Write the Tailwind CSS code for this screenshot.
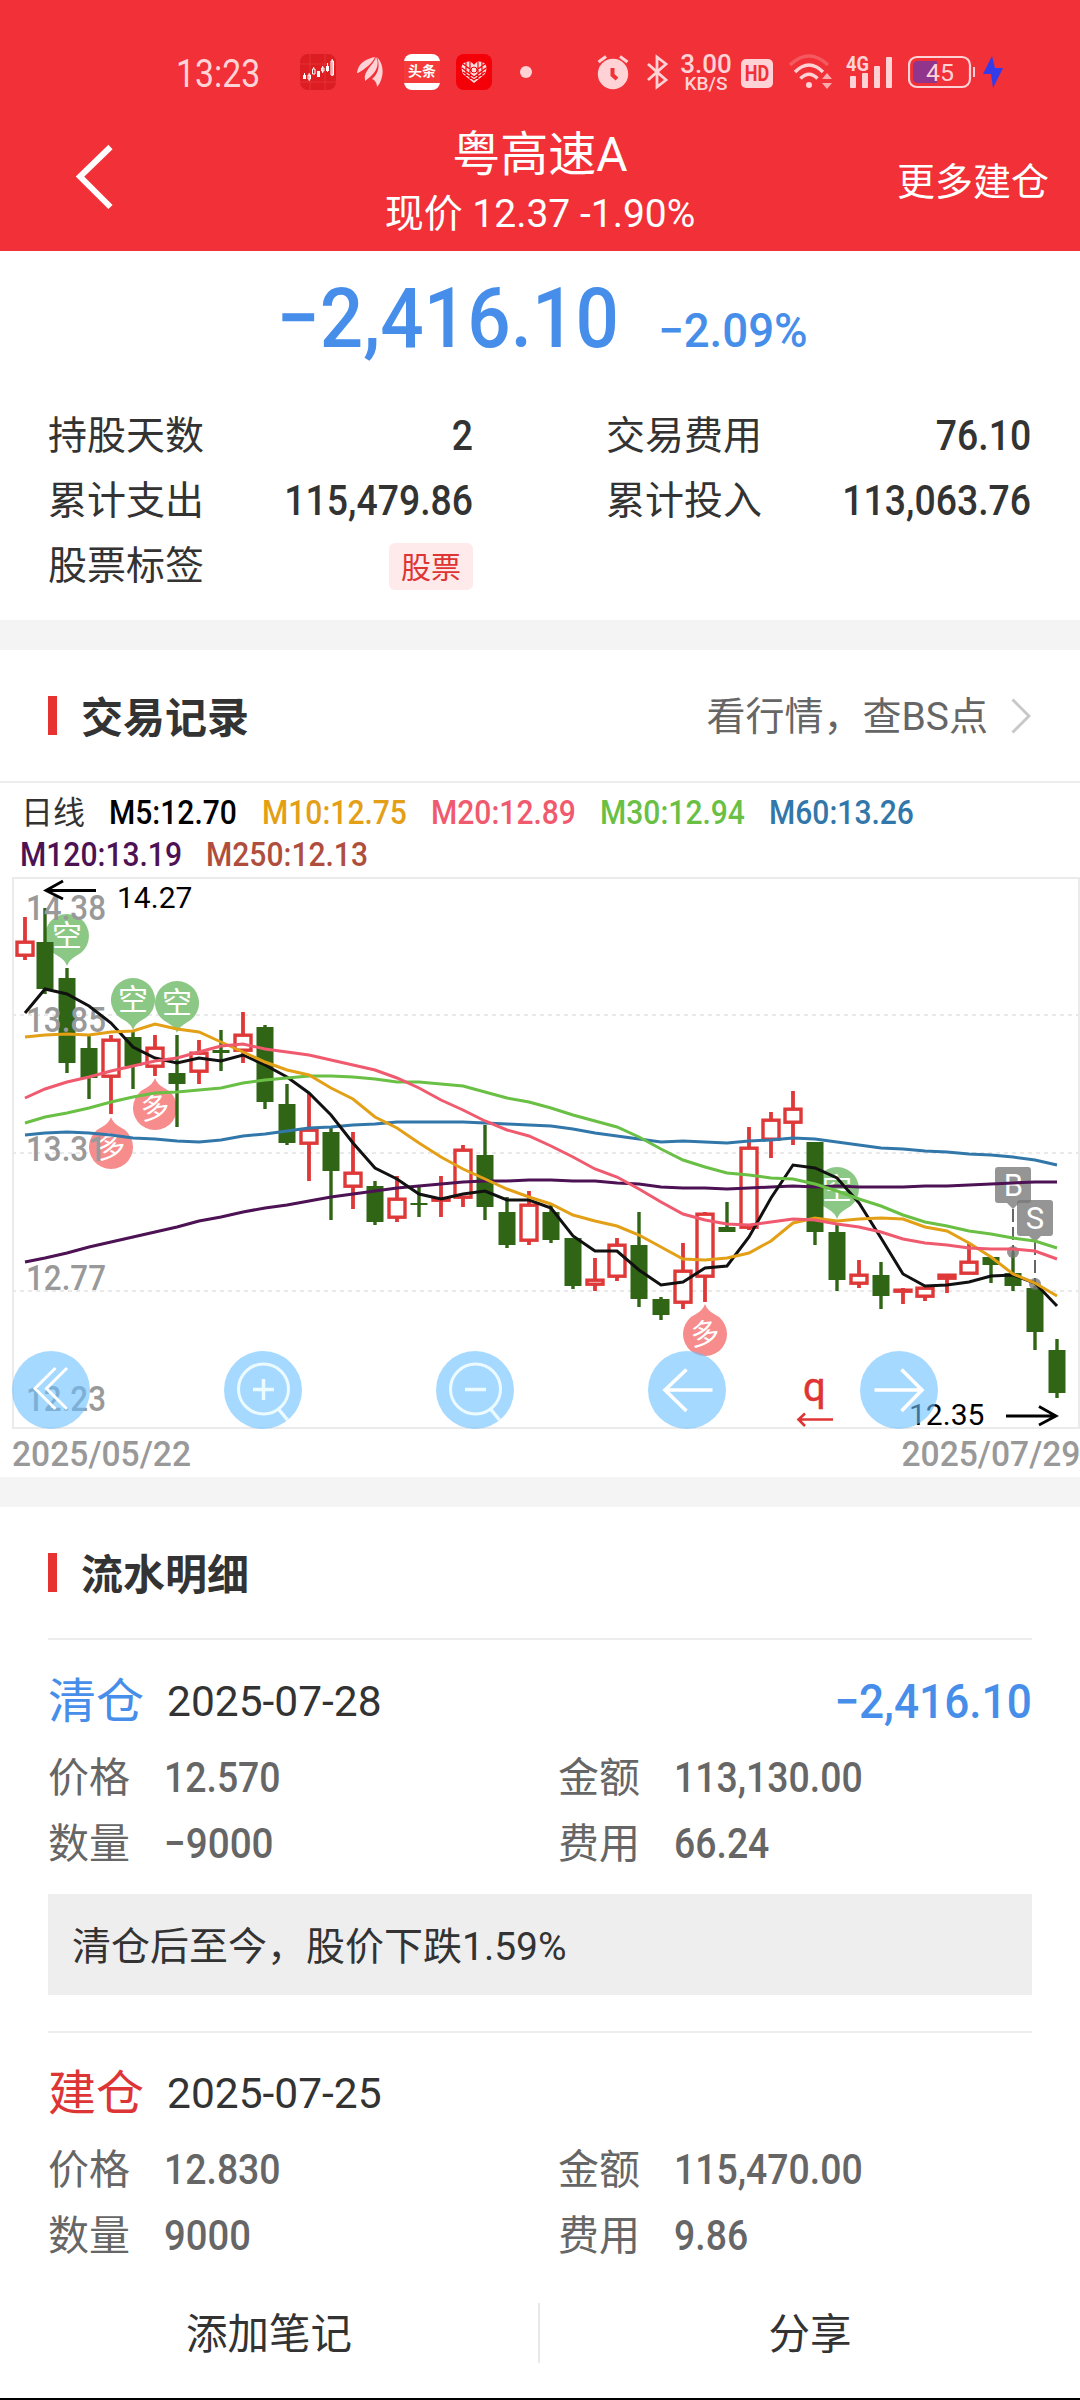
<!DOCTYPE html>
<html lang="zh-CN">

<head>
    <meta charset="UTF-8">
    <meta name="viewport" content="width=device-width, initial-scale=1.0">
    <title>粤高速A</title>
    <script src="https://cdn.jsdelivr.net/npm/@tailwindcss/browser@4"></script>
</head>

<body class="w-[1080px] h-[2400px] overflow-hidden bg-white text-[#333] font-[Roboto,'Noto_Sans_CJK_SC',sans-serif]">
    <div class="flex flex-col h-[2400px] border-b-2 border-black">
        <header class="h-[251px] shrink-0 bg-[#f13038] text-white flex flex-col">
            <!-- status bar -->
            <div class="h-[104px] pt-[40px] flex text-[#ffd3d5]">
                <div class="flex items-center h-[64px] pl-[176px]">
                    <span class="w-[124px] pt-[3px] text-[38px] leading-none whitespace-nowrap"><span class="inline-block origin-left scale-x-[.89]">13:23</span></span>
                    <svg class="w-9 h-9" viewBox="0 0 36 36">
                        <rect width="36" height="36" rx="8" fill="#dc1e22"/>
                        <path d="M10 0v36M25 0v36M0 10h36M0 28h36" stroke="#e8393c" stroke-width=".7"/>
                        <g fill="#fff"><path d="M3 21h3v4H3zM17 17h3v6h-3zM26 12h3v5h-3z"/></g>
                        <g fill="none" stroke="#fff" stroke-width="1"><path d="M4.500 19v6M8 21h2.500v4H8zM9.200 19v8M12.500 15H15v5h-2.500zM13.700 13v2M21.500 14H24v3h-2.500zM22.700 12v7M27.500 9v9M31 7h2.500v14H31zM32.200 5v17"/></g>
                    </svg>
                    <svg class="w-[26px] h-[30px] ml-[21px]" viewBox="0 0 26 30" fill="currentColor">
                        <path d="M0 16C1 6 9 2 18 0C15 7 9 11 1 16z"/>
                        <path d="M8 23C6 14 16 9 19 0C24 9 17 18 8 24z"/>
                        <path d="M15 22C22 16 23 8 20 0C28 8 27 22 20 30C20 26 18 23 15 22z"/>
                    </svg>
                    <div class="w-9 h-9 ml-[21px] rounded-lg bg-white overflow-hidden flex items-center">
                        <div class="w-9 h-[22px] bg-[#f53a3a] text-white text-[14px] font-bold leading-[21px] text-center">头条</div>
                    </div>
                    <svg class="w-9 h-9 ml-[16px]" viewBox="0 0 36 36">
                        <rect width="36" height="36" rx="8" fill="#f30008"/>
                        <path d="M18 29L7 20Q3 10 10 8Q15 6 18 11Q21 6 26 8Q33 10 29 20z" fill="#ffdede"/>
                        <path d="M10 8v14M14 8v17M22 8v17M26 8v14M6 14l12 9 12-9M7 18l11 8 11-8M7 10l11 8 11-8" fill="none" stroke="#f30008" stroke-width="1.200"/>
                        <circle cx="18" cy="16" r="3" fill="#ffdede" stroke="#f30008"/>
                    </svg>
                    <span class="w-3 h-3 rounded-full bg-[#ffd3d5] ml-[28px]"></span>
                </div>
                <div class="flex items-center h-[64px] pl-[65px]">
                    <svg class="w-8 h-[36px]" viewBox="0 0 32 36">
                        <circle cx="16" cy="20" r="15.200" fill="currentColor"/>
                        <path d="M1.500 8L9 2.500M30.500 8L23 2.500" stroke="currentColor" stroke-width="3"/>
                        <path d="M15.500 14v7l4.500 4" fill="none" stroke="#f13038" stroke-width="4"/>
                    </svg>
                    <svg class="w-[22px] h-[36px] ml-[18px]" viewBox="0 0 22 36" fill="none" stroke="currentColor" stroke-width="2.800">
                        <path d="M1 10L19 26L10 33V3L19 10L1 26"/>
                    </svg>
                    <div class="w-[52px] ml-[11px] pt-[4px] flex flex-col items-center font-medium whitespace-nowrap">
                        <span class="text-[26px] leading-[20px]">3.00</span>
                        <span class="text-[19px] leading-[20px]">KB/S</span>
                    </div>
                    <div class="w-8 h-[29px] ml-[9px] mt-[2px] rounded-[5px] bg-[#ffd3d5] text-[#f13038] text-[22px] leading-[30px] font-bold flex justify-center"><span class="scale-x-[.82]">HD</span></div>
                    <svg class="w-[46px] h-[36px] ml-[16px]" viewBox="0 0 46 36" fill="none" stroke="currentColor" stroke-width="3.500">
                        <path d="M1 11Q20-7 39 11" opacity=".25"/>
                        <path d="M6 18Q20 4 34 18M11.500 24.500Q20 16 28.500 24.500"/>
                        <circle cx="20" cy="31" r="3" fill="currentColor" stroke="none"/>
                        <path d="M33 25l5-6 5 6zM33 29h10l-5 6z" fill="currentColor" stroke="none" opacity=".75"/>
                    </svg>
                    <svg class="w-[48px] h-[36px] ml-[11px] overflow-visible" viewBox="0 0 48 36" fill="currentColor">
                        <text x="0" y="17" font-size="21" font-weight="700" textLength="23" lengthAdjust="spacingAndGlyphs">4G</text>
                        <rect x="4" y="22" width="6" height="12" rx="1"/><rect x="16" y="19" width="6" height="15" rx="1"/><rect x="28" y="12" width="6" height="22" rx="1"/><rect x="40" y="3" width="6" height="31" rx="1"/>
                    </svg>
                    <svg class="w-[68px] h-[34px] ml-[14px]" viewBox="0 0 68 34">
                        <rect x="1" y="2" width="61" height="30" rx="8" fill="none" stroke="currentColor" stroke-width="2.200"/>
                        <path d="M10 6H29V28H10Q5 28 5 23V11Q5 6 10 6z" fill="#90358b"/>
                        <path d="M65 12h2v10h-2z" fill="currentColor"/>
                        <text x="18" y="25.500" font-size="24" fill="currentColor" textLength="28" lengthAdjust="spacingAndGlyphs">45</text>
                    </svg>
                    <svg class="w-5 h-8 ml-[7px]" viewBox="0 0 20 32"><path d="M9 0L0 18h8l2 14L20 12h-8z" fill="#333ce8"/></svg>
                </div>
            </div>
            <!-- title bar -->
            <div class="h-[147px] grid grid-cols-[300px_1fr_300px]">
                <svg class="w-[40px] h-[70px] ml-[75px] mt-[37px]" viewBox="0 0 40 70" fill="none" stroke="#fff" stroke-width="6"><path d="M35.500 6L5 35.500L35.500 66"/></svg>
                <div class="flex flex-col items-center whitespace-nowrap">
                    <h1 class="text-[48px] leading-[60px] mt-[21px]">粤高速A</h1>
                    <p class="text-[39px] leading-[50px] mt-[4px]">现价 12.37 -1.90%</p>
                </div>
                <a class="text-[38px] leading-[56px] mt-[50px] mr-[31px] text-right">更多建仓</a>
            </div>
        </header>

        <section class="h-[369px] shrink-0">
            <div class="h-[134px] flex text-[#468eea] font-medium leading-[100px] whitespace-nowrap">
                <div class="w-[619px] pt-[18px] text-[84px] text-right"><span class="inline-block origin-right scale-x-[.91]">−2,416.10</span></div>
                <div class="pl-[39px] pt-[30px] text-[48px]"><span class="inline-block origin-left scale-x-[.95]">−2.09%</span></div>
            </div>
            <div class="grid grid-cols-[425px_425px] gap-x-[133px] pl-[48px] pt-[19px] text-[39px] leading-[65px]">
                <div class="flex justify-between"><span>持股天数</span><b class="-mt-px font-medium text-[42px] origin-right scale-x-[.89]">2</b></div>
                <div class="flex justify-between"><span>交易费用</span><b class="-mt-px font-medium text-[42px] origin-right scale-x-[.89]">76.10</b></div>
                <div class="flex justify-between"><span>累计支出</span><b class="-mt-px font-medium text-[42px] origin-right scale-x-[.89]">115,479.86</b></div>
                <div class="flex justify-between"><span>累计投入</span><b class="-mt-px font-medium text-[42px] origin-right scale-x-[.89]">113,063.76</b></div>
                <div class="flex justify-between items-center"><span>股票标签</span><span class="w-[84px] h-[47px] rounded-md bg-[#feeaea] text-[#de3433] text-[30px] leading-[50px] text-center">股票</span></div>
            </div>
        </section>

        <div class="h-[30px] shrink-0 bg-[#f4f4f4]"></div>

        <section class="h-[827px] shrink-0">
            <div class="h-[133px] border-b-2 border-[#ededed] flex items-center pl-[48px] pr-[49px]">
                <span class="w-[9px] h-[39px] bg-[#e63331]"></span>
                <h2 class="ml-[24px] pt-[5px] text-[42px] font-bold">交易记录</h2>
                <a class="ml-auto pt-[4px] text-[39px] text-[#666]">看行情，查BS点</a>
                <svg class="w-[20px] h-[36px] ml-[23px]" viewBox="0 0 20 36" fill="none" stroke="#c8c8c8" stroke-width="3"><path d="M1.500 1.500L18 18L1.500 34.500"/></svg>
            </div>
            <div class="h-[94px] pt-[9px] text-[33px] leading-[41px] whitespace-nowrap">
                <div class="flex pl-[21px]">
                    <span class="w-[88px] pt-px text-[32px]">日线</span>
                    <span class="w-[153px] font-medium text-black"><span class="inline-block origin-left scale-x-[.91]">M5:12.70</span></span>
                    <span class="w-[169px] font-medium text-[#e3a017]"><span class="inline-block origin-left scale-x-[.91]">M10:12.75</span></span>
                    <span class="w-[169px] font-medium text-[#f05a6e]"><span class="inline-block origin-left scale-x-[.91]">M20:12.89</span></span>
                    <span class="w-[169px] font-medium text-[#6abf45]"><span class="inline-block origin-left scale-x-[.91]">M30:12.94</span></span>
                    <span class="w-[169px] font-medium text-[#3277a9]"><span class="inline-block origin-left scale-x-[.91]">M60:13.26</span></span>
                </div>
                <div class="flex pl-[20px] font-medium">
                    <span class="w-[186px] text-[#4d1254]"><span class="inline-block origin-left scale-x-[.91]">M120:13.19</span></span>
                    <span class="text-[#b04e3e]"><span class="inline-block origin-left scale-x-[.91]">M250:12.13</span></span>
                </div>
            </div>
            <svg id="chart" class="block w-[1080px] h-[553px]" viewBox="0 877 1080 553">
                <rect x="13" y="878" width="1066" height="550" fill="none" stroke="#ebebeb" stroke-width="2"/>
                <path d="M12 1015H1079M12 1153H1079M12 1291H1079" stroke="#e9e9e9" stroke-width="2" stroke-dasharray="4 4"/>
                <g id="marks"></g>
                <g id="candles"></g>
                <!-- buy / sell points -->
                <g fill="#777" fill-opacity=".78">
                    <path d="M998 1167h30q3 0 3 3v30q0 3-3 3h-9l-6 6-6-6h-9q-3 0-3-3v-30q0-3 3-3z"/>
                    <path d="M1020 1200h30q3 0 3 3v30q0 3-3 3h-9l-6 6-6-6h-9q-3 0-3-3v-30q0-3 3-3z"/>
                    <circle cx="1013" cy="1252" r="6"/><circle cx="1035" cy="1284" r="6"/>
                </g>
                <path d="M1013 1209v43M1035 1242v40" stroke="#666" stroke-width="2" stroke-dasharray="13 5"/>
                <g fill="#fff" font-size="31" text-anchor="middle"><text x="1013.500" y="1196">B</text><text x="1035" y="1229">S</text></g>
                <g fill="#999" font-size="35" font-weight="500">
                    <text x="26" y="920" textLength="80" lengthAdjust="spacingAndGlyphs">14.38</text>
                    <text x="26" y="1032" textLength="80" lengthAdjust="spacingAndGlyphs">13.85</text>
                    <text x="26" y="1161" textLength="80" lengthAdjust="spacingAndGlyphs">13.31</text>
                    <text x="26" y="1290" textLength="80" lengthAdjust="spacingAndGlyphs">12.77</text>
                    <text x="26" y="1411" textLength="80" lengthAdjust="spacingAndGlyphs">12.23</text>
                </g>
                <g id="lines" fill="none" stroke-width="3"></g>
                <g font-size="30" fill="#000"><text x="117" y="908">14.27</text><text x="909" y="1425">12.35</text></g>
                <path d="M96 890.500H46M63 881L46 890.500L63 899M1006 1416H1056M1039 1406.500L1056 1416L1039 1425" fill="none" stroke="#000" stroke-width="2.800"/>
                <text x="803" y="1401" font-size="40" fill="#e03434" stroke="#e03434" stroke-width=".5">q</text>
                <path d="M833 1419.500H799M805 1413.500L798.500 1419.500L805 1426" fill="none" stroke="#e03434" stroke-width="2.600"/>
                <!-- chart tools -->
                <g fill="#6bc0ff" fill-opacity=".6"><circle cx="51" cy="1390" r="39"/><circle cx="263" cy="1390" r="39"/><circle cx="475" cy="1390" r="39"/><circle cx="687" cy="1390" r="39"/><circle cx="899" cy="1390" r="39"/></g>
                <g fill="none" stroke="#fff" stroke-width="3">
                    <path d="M55.500 1368L35 1388.500L55.500 1409M67 1368L46.500 1388.500L67 1409"/>
                    <g stroke="#ecfbff">
                        <circle cx="263.500" cy="1389" r="25"/><path d="M278.500 1409L287.500 1420M253 1389.500h21M263.500 1379v21" stroke-width="3.500"/>
                        <circle cx="475.500" cy="1389" r="25"/><path d="M490.500 1409L499.500 1420M465 1389.500h21" stroke-width="3.500"/>
                    </g>
                    <path d="M712.500 1390H664M686.500 1369.500L665 1390L686.500 1411" stroke-width="3.600"/>
                    <path d="M874.500 1390H923M901.500 1369.500L922 1390L901.500 1411" stroke-width="3.600"/>
                </g>
            </svg>
            <div class="h-[47px] pt-px flex justify-between pl-[12px] text-[35px] leading-[47px] font-medium text-[#999]">
                <span class="origin-left scale-x-[.96]">2025/05/22</span>
                <span class="origin-right scale-x-[.96]">2025/07/29</span>
            </div>
        </section>

        <div class="h-[30px] shrink-0 bg-[#f4f4f4]"></div>

        <section class="px-[48px]">
            <div class="h-[133px] border-b-2 border-[#ededed] flex items-center">
                <span class="w-[9px] h-[39px] bg-[#e63331]"></span>
                <h2 class="ml-[24px] pt-[5px] text-[42px] font-bold">流水明细</h2>
            </div>
            <div class="h-[99px] pt-[24px] flex items-center">
                <span class="text-[48px] text-[#468eea]">清仓</span>
                <span class="ml-[23px] text-[42.5px]">2025-07-28</span>
                <span class="ml-auto text-[48px] font-medium text-[#468eea] origin-right scale-x-[.92]">−2,416.10</span>
            </div>
            <div class="grid grid-cols-[116px_394px_116px_1fr] pt-[6px] text-[41px] leading-[66px] text-[#666]">
                <span>价格</span><b class="font-medium text-[42px] origin-left scale-x-[.89]">12.570</b>
                <span>金额</span><b class="font-medium text-[42px] origin-left scale-x-[.89]">113,130.00</b>
                <span>数量</span><b class="font-medium text-[42px] origin-left scale-x-[.92]">−9000</b>
                <span>费用</span><b class="font-medium text-[42px] origin-left scale-x-[.89]">66.24</b>
            </div>
            <p class="h-[101px] mt-[17px] bg-[#eee] pl-[24px] text-[39px] leading-[106px]">清仓后至今，股价下跌1.59%</p>
            <div class="h-[108px] mt-[36px] pt-[16px] border-t-2 border-[#ededed] flex items-center">
                <span class="text-[48px] text-[#dd3535]">建仓</span>
                <span class="ml-[23px] text-[42.5px]">2025-07-25</span>
            </div>
            <div class="grid grid-cols-[116px_394px_116px_1fr] -mt-[2px] text-[41px] leading-[66px] text-[#666]">
                <span>价格</span><b class="font-medium text-[42px] origin-left scale-x-[.89]">12.830</b>
                <span>金额</span><b class="font-medium text-[42px] origin-left scale-x-[.89]">115,470.00</b>
                <span>数量</span><b class="font-medium text-[42px] origin-left scale-x-[.91]">9000</b>
                <span>费用</span><b class="font-medium text-[42px] origin-left scale-x-[.89]">9.86</b>
            </div>
        </section>

        <footer class="mt-auto h-[95px] flex text-[41.5px] leading-[64px]">
            <a class="w-[538px] text-center">添加笔记</a>
            <span class="w-[2px] h-[60px] bg-[#e8e8e8]"></span>
            <a class="w-[540px] text-center">分享</a>
        </footer>
    </div>

    <script>
        // [up?, high, body top, body bottom, low]
        const candles = [
            [1, 917, 941, 956, 960], [0, 908, 942, 989, 994], [0, 968, 978, 1063, 1073], [0, 1035, 1048, 1078, 1099],
            [1, 1035, 1039, 1077, 1114], [0, 1032, 1037, 1066, 1089], [1, 1035, 1047, 1067, 1076], [0, 1035, 1073, 1084, 1127],
            [1, 1040, 1052, 1072, 1084], [0, 1030, 1050, 1053, 1071], [1, 1012, 1034, 1051, 1063], [0, 1025, 1027, 1102, 1109],
            [0, 1084, 1104, 1143, 1145], [1, 1093, 1129, 1144, 1181], [0, 1128, 1132, 1171, 1220], [1, 1132, 1172, 1187, 1209],
            [0, 1181, 1186, 1222, 1225], [1, 1176, 1198, 1218, 1222], [0, 1186, 1203, 1205, 1217], [1, 1176, 1198, 1200, 1217],
            [1, 1145, 1149, 1198, 1207], [0, 1125, 1155, 1207, 1220], [0, 1197, 1212, 1245, 1248], [1, 1191, 1204, 1241, 1245],
            [0, 1205, 1212, 1240, 1243], [0, 1238, 1238, 1286, 1289], [1, 1258, 1279, 1285, 1291], [1, 1238, 1244, 1277, 1281],
            [0, 1212, 1245, 1299, 1307], [0, 1297, 1299, 1315, 1320], [1, 1243, 1270, 1303, 1309], [1, 1212, 1213, 1277, 1302],
            [0, 1202, 1227, 1232, 1232], [1, 1127, 1147, 1228, 1230], [1, 1112, 1119, 1140, 1158], [1, 1091, 1108, 1123, 1145],
            [0, 1142, 1142, 1232, 1245], [0, 1225, 1232, 1280, 1291], [1, 1260, 1274, 1284, 1288], [0, 1262, 1275, 1296, 1309],
            [1, 1288, 1289, 1292, 1304], [1, 1286, 1287, 1297, 1301], [1, 1274, 1274, 1279, 1293], [1, 1243, 1261, 1274, 1274],
            [0, 1257, 1257, 1265, 1283], [0, 1252, 1273, 1286, 1291], [0, 1286, 1288, 1332, 1350], [0, 1339, 1350, 1393, 1398]
        ];

        // moving averages, one value for each candle
        const averages = {
            '#3277a9': [1135, 1133, 1132, 1133, 1135, 1138, 1139, 1141, 1142, 1140, 1136, 1134, 1131, 1128, 1127, 1125, 1124, 1122, 1122, 1122, 1122, 1123, 1124, 1125, 1126, 1129, 1133, 1136, 1139, 1142, 1141, 1142, 1143, 1141, 1140, 1138, 1139, 1142, 1145, 1148, 1149, 1151, 1152, 1154, 1155, 1157, 1160, 1165],
            '#4d1254': [1262, 1258, 1253, 1247, 1242, 1237, 1232, 1227, 1221, 1217, 1212, 1208, 1205, 1201, 1197, 1194, 1191, 1188, 1186, 1184, 1182, 1181, 1181, 1180, 1180, 1181, 1181, 1183, 1184, 1187, 1188, 1188, 1189, 1188, 1187, 1186, 1187, 1186, 1187, 1187, 1187, 1186, 1186, 1185, 1184, 1183, 1182, 1182],
            '#111111': [1013, 989, 994, 1006, 1023, 1047, 1058, 1063, 1058, 1061, 1055, 1065, 1077, 1093, 1115, 1143, 1168, 1179, 1194, 1199, 1194, 1191, 1200, 1200, 1208, 1236, 1251, 1251, 1270, 1285, 1282, 1268, 1266, 1237, 1198, 1165, 1168, 1178, 1203, 1238, 1274, 1286, 1285, 1282, 1276, 1275, 1283, 1306],
            '#6abf45': [1123, 1117, 1113, 1108, 1102, 1097, 1093, 1092, 1090, 1088, 1083, 1080, 1078, 1076, 1076, 1077, 1079, 1082, 1082, 1084, 1086, 1092, 1098, 1102, 1108, 1115, 1121, 1127, 1137, 1149, 1160, 1167, 1173, 1175, 1178, 1179, 1184, 1191, 1199, 1206, 1215, 1222, 1226, 1231, 1234, 1238, 1241, 1248],
            '#e3a017': [1037, 1035, 1034, 1035, 1032, 1031, 1024, 1029, 1032, 1042, 1052, 1062, 1070, 1075, 1088, 1099, 1117, 1128, 1143, 1157, 1169, 1179, 1189, 1197, 1204, 1215, 1221, 1226, 1235, 1247, 1259, 1260, 1258, 1253, 1241, 1223, 1218, 1221, 1219, 1218, 1219, 1227, 1231, 1243, 1257, 1274, 1283, 1296],
            '#f05a6e': [1098, 1089, 1082, 1077, 1071, 1066, 1061, 1058, 1052, 1046, 1044, 1049, 1052, 1055, 1060, 1065, 1070, 1078, 1088, 1100, 1110, 1121, 1130, 1136, 1146, 1157, 1169, 1177, 1189, 1202, 1214, 1220, 1224, 1225, 1222, 1219, 1220, 1224, 1227, 1232, 1239, 1243, 1245, 1248, 1249, 1249, 1251, 1259]
        };

        const bears = [[67, 936], [133, 1000], [177, 1003], [837, 1189]];
        const bulls = [[155, 1108], [111, 1147], [705, 1334]];

        const xOf = i => i === 0 ? 25 : 23 + 22 * i;

        document.querySelector('#candles').innerHTML = candles.map(([up, high, top, bottom, low], i) => {
            const x = xOf(i);
            if (!up) {
                return `<path d="M${x - 8.5} ${top}h17v${bottom - top}h-17zM${x - 1.7} ${high}h3.400v${low - high}h-3.400z" fill="#2f6514"/>`;
            }
            const wicks = `<path d="M${x} ${high}V${top}M${x} ${bottom}V${low}" stroke="#de3838" stroke-width="3.800"/>`;
            const h = Math.max(bottom - top - 2, 1);
            return wicks + `<rect x="${x - 8}" y="${top + 1.2}" width="16" height="${h}" fill="#fff" stroke="#de3838" stroke-width="3.400"/>`;
        }).join('');

        document.querySelector('#lines').innerHTML = Object.entries(averages).map(([color, ys]) =>
            `<polyline stroke="${color}" points="${ys.map((y, i) => xOf(i) + ',' + y).join(' ')}"/>`
        ).join('');

        document.querySelector('#marks').innerHTML = bears.map(([x, y]) =>
            `<g transform="translate(${x} ${y})"><path d="M0 30Q-2 24-9 20A22 22 0 1 1 9 20Q2 24 0 30z" fill="#8cc885"/><text y="10" font-size="30" fill="#fff" text-anchor="middle">空</text></g>`
        ).join('') + bulls.map(([x, y]) =>
            `<g transform="translate(${x} ${y})"><path d="M0-30Q2-24 9-20A22 22 0 1 1-9-20Q-2-24 0-30z" fill="#f78c8c"/><text y="10" font-size="29" fill="#fff" text-anchor="middle" transform="rotate(-8)">多</text></g>`
        ).join('');
    </script>
</body>

</html>
